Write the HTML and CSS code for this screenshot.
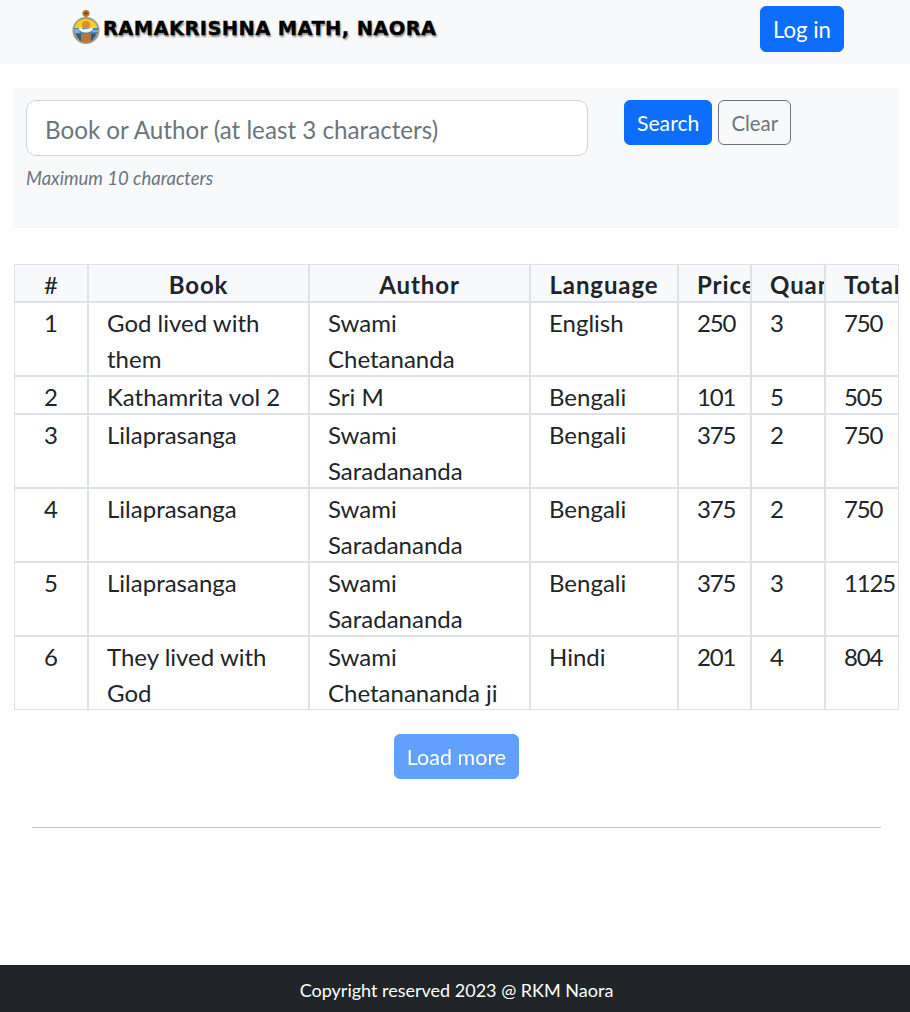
FILE: index.html
```html
<!DOCTYPE html>
<html lang="en">
<head>
<meta charset="utf-8">
<title>Ramakrishna Math, Naora</title>
<link rel="stylesheet" href="styles.css">
</head>
<body>
<nav class="navbar">
  <div class="brand">
    <svg class="logo" width="30" height="36" viewBox="0 0 30 36" aria-hidden="true">
      <path d="M15 1c2.400 0 3.600 1.600 3.600 3.400S17 7.400 15.600 8h-1.200C13 7.400 11.400 6.200 11.400 4.400S12.600 1 15 1z" fill="#b5762a"/>
      <circle cx="15" cy="4.200" r="1.500" fill="#7a3f1e"/>
      <circle cx="15" cy="21.500" r="13.500" fill="#9a9a8c"/>
      <path d="M3.300 19a12 12 0 0 1 23.400 0z" fill="#f5cf25"/>
      <circle cx="15" cy="16" r="4.200" fill="#ea8a20"/>
      <path d="M2.800 19h24.400l-.6 5.500H3.400z" fill="#4a86ba"/>
      <path d="M3 21h6M21 22h6M3.500 23h5" stroke="#dfe8ee" stroke-width=".8"/>
      <path d="M8 20c0-2 2.500-2 3-.5.800 1.200 2.500.5 5 .2 2.500-.3 4.500-.8 6.500-1.200-1 3-3.500 5-8 5-3.500 0-5.500-1.200-6.500-3.500z" fill="#f6f6f2"/>
      <path d="M4.500 24.500h21l-2 4-3 3.500h-11l-3-3.500z" fill="#33597f"/>
      <path d="M10 24.500h10v7.800a12 12 0 0 1-10 0z" fill="#b5773e"/>
    </svg>
    <span class="brand-text">RAMAKRISHNA MATH, NAORA</span>
  </div>
  <a class="btn btn-primary btn-login" href="#">Log in</a>
</nav>

<section class="search-panel">
  <div class="search-field">
    <input class="search-input" type="text" placeholder="Book or Author (at least 3 characters)">
    <small class="search-hint">Maximum 10 characters</small>
  </div>
  <div class="search-actions">
    <button class="btn btn-primary btn-search" type="button">Search</button>
    <button class="btn btn-outline" type="button">Clear</button>
  </div>
</section>

<table class="orders">
  <colgroup>
    <col class="c-num"><col class="c-book"><col class="c-author"><col class="c-lang"><col class="c-price"><col class="c-qty"><col class="c-last">
  </colgroup>
  <thead>
    <tr><th>#</th><th>Book</th><th>Author</th><th>Language</th><th>Price</th><th>Quantity</th><th>Total</th></tr>
  </thead>
  <tbody>
    <tr><td class="num">1</td><td>God lived with them</td><td>Swami Chetananda</td><td>English</td><td>250</td><td>3</td><td>750</td></tr>
    <tr><td class="num">2</td><td>Kathamrita vol 2</td><td>Sri M</td><td>Bengali</td><td>101</td><td>5</td><td>505</td></tr>
    <tr><td class="num">3</td><td>Lilaprasanga</td><td>Swami Saradananda</td><td>Bengali</td><td>375</td><td>2</td><td>750</td></tr>
    <tr><td class="num">4</td><td>Lilaprasanga</td><td>Swami Saradananda</td><td>Bengali</td><td>375</td><td>2</td><td>750</td></tr>
    <tr><td class="num">5</td><td>Lilaprasanga</td><td>Swami Saradananda</td><td>Bengali</td><td>375</td><td>3</td><td>1125</td></tr>
    <tr><td class="num">6</td><td>They lived with God</td><td>Swami Chetanananda ji</td><td>Hindi</td><td>201</td><td>4</td><td>804</td></tr>
  </tbody>
</table>

<div class="load-row">
  <button class="btn btn-primary btn-faded" type="button">Load more</button>
</div>

<hr class="divider">

<footer class="footer">Copyright reserved 2023 @ RKM Naora</footer>
</body>
</html>
```

FILE: styles.css
```css
* { box-sizing: border-box; }

html, body { height: 100%; }

body {
  margin: 0;
  display: flex;
  flex-direction: column;
  min-height: 1012px;
  background: #fff;
  color: #212529;
  font-family: Lato, "Noto Sans", "Liberation Sans", sans-serif;
  font-size: 24px;
  line-height: 36px;
}

.navbar {
  height: 64px;
  flex: none;
  background: #f8f9fa;
  display: flex;
  align-items: center;
  justify-content: space-between;
  padding: 0 66px 6px 71px;
}

.brand { display: flex; align-items: center; }

.logo { display: block; margin-top: -4px; filter: blur(.35px); }

.brand-text {
  margin-left: 2px;
  font-family: "DejaVu Sans", "Liberation Sans", sans-serif;
  font-weight: 700;
  font-size: 19.500px;
  letter-spacing: 0.35px;
  color: #000;
  -webkit-text-stroke: 0.3px #000;
  text-shadow: 1px 2px 2px rgba(0,0,0,.45);
}

.btn {
  display: inline-block;
  height: 45px;
  padding: 0 12px;
  border: 1px solid transparent;
  border-radius: 6px;
  font-family: inherit;
  font-size: 21.500px;
  line-height: 44px;
  text-decoration: none;
  cursor: pointer;
}

.btn-primary { background: #0d6efd; border-color: #0d6efd; color: #fff; }

.btn-search { font-size: 21.200px; }

.btn-outline {
  background: transparent;
  border-color: #6c757d;
  color: #6c757d;
  font-size: 20.400px;
}

.btn-faded { opacity: .65; }

.btn-login {
  align-self: flex-start;
  margin-top: 6px;
  height: 46px;
  font-size: 22.200px;
  line-height: 45px;
}

.search-panel {
  flex: none;
  margin: 24px 11px 0 14px;
  height: 140px;
  padding: 12px;
  background: #f8f9fa;
  display: flex;
  align-items: flex-start;
}

.search-field { width: 562px; display: flex; flex-direction: column; }

.search-input {
  width: 100%;
  height: 56px;
  padding: 2px 18px 0;
  background: #fff;
  border: 1px solid #ced4da;
  border-radius: 10px;
  font-family: inherit;
  font-size: 24.200px;
  color: #212529;
}

.search-input::placeholder { color: #6c757d; opacity: 1; }

.search-hint {
  margin-top: 7px;
  font-size: 18.500px;
  line-height: 30px;
  font-style: italic;
  color: #6c757d;
}

.search-actions { margin-left: 36px; display: flex; gap: 6px; }

.orders {
  flex: none;
  margin: 36px 11px 0 14px;
  width: 885px;
  table-layout: fixed;
  border-collapse: separate;
  border-spacing: 0;
  border-left: 1px solid #dee2e6;
  border-bottom: 1px solid #dee2e6;
}

.c-num { width: 74px; }
.c-book, .c-author { width: 221px; }
.c-lang { width: 148px; }
.c-price { width: 73px; }
.c-qty { width: 74px; }
.c-last { width: 73px; }

.orders th, .orders td {
  border-right: 2px solid #dee2e6;
  padding: 0 18px;
  vertical-align: top;
  overflow: hidden;
}

/* Nudges the text down 2px without making the rows taller. */
.orders td { border-top: 2px solid #dee2e6; padding-top: 2px; }
.orders td::after { content: ""; display: block; margin-bottom: -2px; }

.orders th:last-child, .orders td:last-child { border-right-width: 1px; padding-right: 0; }

.orders td:nth-child(n+5) { letter-spacing: -1.2px; }

.orders th {
  border-top: 1px solid #dee2e6;
  padding-top: 3px;
  line-height: 33px;
  background: #f8f9fa;
  font-weight: 700;
  letter-spacing: .9px;
  text-align: center;
  white-space: nowrap;
}

.orders th:first-child { padding: 3px 0 0; font-weight: 400; letter-spacing: 0; }
.orders td.num { padding: 2px 0 0; text-align: center; }

.load-row {
  flex: none;
  margin: 24px 11px 0 14px;
  display: flex;
  justify-content: center;
}

.divider {
  flex: none;
  width: 849px;
  margin: 48px 0 0 32px;
  border: 0;
  border-top: 1px solid #c4c4c4;
}

.footer {
  margin-top: auto;
  flex: none;
  height: 47px;
  padding-left: 3px;
  background: #212529;
  color: #fff;
  font-size: 18px;
  line-height: 50px;
  text-align: center;
}
```
